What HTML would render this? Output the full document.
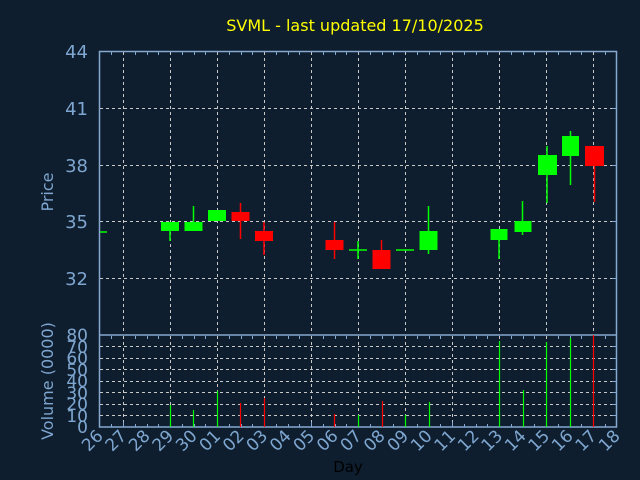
<!DOCTYPE html>
<html><head><meta charset="utf-8"><style>
html,body{margin:0;padding:0;background:#0f1e2e;}
svg{display:block}
text{font-family:"DejaVu Sans","Liberation Sans",sans-serif;}
</style></head><body>
<svg width="640" height="480" xmlns="http://www.w3.org/2000/svg">
<rect width="640" height="480" fill="#0f1e2e"/>
<text x="355" y="31" fill="#ffff00" font-size="16" text-anchor="middle">SVML - last updated 17/10/2025</text>
<g stroke="#c8c8c8" stroke-width="1" stroke-dasharray="3,3">
<path d="M123.5 52V334M170.5 52V334M217.5 52V334M264.5 52V334M311.5 52V334M358.5 52V334M405.5 52V334M452.5 52V334M499.5 52V334M546.5 52V334M593.5 52V334"/>
<path d="M100 108.5H616M100 165.5H616M100 221.5H616M100 278.5H616"/>
<path d="M123.5 336V427M170.5 336V427M217.5 336V427M264.5 336V427M311.5 336V427M358.5 336V427M405.5 336V427M452.5 336V427M499.5 336V427M546.5 336V427M593.5 336V427"/>
<path d="M100 346.5H616M100 358.5H616M100 369.5H616M100 381.5H616M100 392.5H616M100 404.5H616M100 415.5H616"/>
</g>
<g fill="none" stroke="#86a8d0" stroke-width="1.5">
<rect x="99.5" y="51.5" width="517" height="375.5"/>
<path d="M99.5 335H617"/>
</g>
<g stroke="#86a8d0" stroke-width="1">
<path d="M111.5 52v3M135.5 52v3M147.5 52v3M158.5 52v3M182.5 52v3M194.5 52v3M205.5 52v3M229.5 52v3M241.5 52v3M252.5 52v3M276.5 52v3M288.5 52v3M299.5 52v3M323.5 52v3M335.5 52v3M346.5 52v3M370.5 52v3M382.5 52v3M393.5 52v3M417.5 52v3M429.5 52v3M440.5 52v3M464.5 52v3M476.5 52v3M487.5 52v3M511.5 52v3M523.5 52v3M534.5 52v3M558.5 52v3M570.5 52v3M581.5 52v3M605.5 52v3"/>
<path d="M111.5 336v3M135.5 336v3M147.5 336v3M158.5 336v3M182.5 336v3M194.5 336v3M205.5 336v3M229.5 336v3M241.5 336v3M252.5 336v3M276.5 336v3M288.5 336v3M299.5 336v3M323.5 336v3M335.5 336v3M346.5 336v3M370.5 336v3M382.5 336v3M393.5 336v3M417.5 336v3M429.5 336v3M440.5 336v3M464.5 336v3M476.5 336v3M487.5 336v3M511.5 336v3M523.5 336v3M534.5 336v3M558.5 336v3M570.5 336v3M581.5 336v3M605.5 336v3"/>
<path d="M111.5 427v-3M135.5 427v-3M147.5 427v-3M158.5 427v-3M182.5 427v-3M194.5 427v-3M205.5 427v-3M229.5 427v-3M241.5 427v-3M252.5 427v-3M276.5 427v-3M288.5 427v-3M299.5 427v-3M323.5 427v-3M335.5 427v-3M346.5 427v-3M370.5 427v-3M382.5 427v-3M393.5 427v-3M417.5 427v-3M429.5 427v-3M440.5 427v-3M464.5 427v-3M476.5 427v-3M487.5 427v-3M511.5 427v-3M523.5 427v-3M534.5 427v-3M558.5 427v-3M570.5 427v-3M581.5 427v-3M605.5 427v-3"/>
<path d="M123.5 427v-5M170.5 427v-5M217.5 427v-5M264.5 427v-5M311.5 427v-5M358.5 427v-5M405.5 427v-5M452.5 427v-5M499.5 427v-5M546.5 427v-5M593.5 427v-5"/>
<path d="M612 108.5h5M612 165.5h5M612 221.5h5M612 278.5h5M612 346.5h5M612 358.5h5M612 369.5h5M612 381.5h5M612 392.5h5M612 404.5h5M612 415.5h5"/>
</g>
<g stroke-width="1.5">
<path d="M100 232H107" stroke="#00ff00"/>
<path d="M170 222V241" stroke="#00ff00"/><rect x="161" y="222" width="18" height="9" fill="#00ff00"/>
<path d="M193.5 206V231" stroke="#00ff00"/><rect x="184.5" y="222" width="18" height="9" fill="#00ff00"/>
<path d="M217 210V221" stroke="#00ff00"/><rect x="208" y="210" width="18" height="11" fill="#00ff00"/>
<path d="M240.5 203V239" stroke="#ff0000"/><rect x="231.5" y="212" width="18" height="9" fill="#ff0000"/>
<path d="M264 222V255" stroke="#ff0000"/><rect x="255" y="231" width="18" height="10" fill="#ff0000"/>
<path d="M334.5 222V259" stroke="#ff0000"/><rect x="325.5" y="240" width="18" height="10" fill="#ff0000"/>
<path d="M358 241V259M349 250H367" stroke="#00ff00"/>
<path d="M381.5 240V269" stroke="#ff0000"/><rect x="372.5" y="250" width="18" height="19" fill="#ff0000"/>
<path d="M405 250H396M405 250H414" stroke="#00ff00"/>
<path d="M428.5 206V254" stroke="#00ff00"/><rect x="419.5" y="231" width="18" height="19" fill="#00ff00"/>
<path d="M499 229V259" stroke="#00ff00"/><rect x="490.5" y="229" width="17" height="11" fill="#00ff00"/>
<path d="M522.5 201V235" stroke="#00ff00"/><rect x="514.5" y="221" width="17" height="11" fill="#00ff00"/>
<path d="M547 146V203" stroke="#00ff00"/><rect x="538" y="155" width="19" height="20" fill="#00ff00"/>
<path d="M570.5 131V185" stroke="#00ff00"/><rect x="562" y="136" width="17" height="20" fill="#00ff00"/>
<path d="M594.5 146V202" stroke="#ff0000"/><rect x="585" y="146" width="19" height="20" fill="#ff0000"/>
</g>
<g stroke-width="1.2">
<path d="M170.5 427V405M193.5 427V410M217.5 427V391M358.5 427V415M405.5 427V415M429.5 427V402M499.5 427V341M523.5 427V390M546.5 427V342M570.5 427V338" stroke="#00ff00"/>
<path d="M240.5 427V403M264.5 427V398M334.5 427V414M382.5 427V401M593.5 427V335" stroke="#ff0000"/>
</g>
<g fill="#7ea6d0" font-size="18" text-anchor="end">
<text x="88" y="58">44</text><text x="88" y="115">41</text><text x="88" y="172">38</text><text x="88" y="228">35</text><text x="88" y="285">32</text>
</g>
<g fill="#7ea6d0" font-size="17" text-anchor="end">
<text x="88" y="341">80</text><text x="88" y="353">70</text><text x="88" y="364">60</text><text x="88" y="376">50</text><text x="88" y="387">40</text><text x="88" y="399">30</text><text x="88" y="410">20</text><text x="88" y="422">10</text><text x="88" y="433">0</text>
</g>
<text transform="translate(53,192) rotate(-90)" fill="#7ea6d0" font-size="16" text-anchor="middle">Price</text>
<text transform="translate(53,381) rotate(-90)" fill="#7ea6d0" font-size="16" text-anchor="middle">Volume (0000)</text>
<g fill="#7ea6d0" font-size="17" text-anchor="end">
<text transform="translate(104,437) rotate(-45)">26</text>
<text transform="translate(127.5,437) rotate(-45)">27</text>
<text transform="translate(151,437) rotate(-45)">28</text>
<text transform="translate(174.5,437) rotate(-45)">29</text>
<text transform="translate(198,437) rotate(-45)">30</text>
<text transform="translate(221.5,437) rotate(-45)">01</text>
<text transform="translate(245,437) rotate(-45)">02</text>
<text transform="translate(268.5,437) rotate(-45)">03</text>
<text transform="translate(292,437) rotate(-45)">04</text>
<text transform="translate(315.5,437) rotate(-45)">05</text>
<text transform="translate(339,437) rotate(-45)">06</text>
<text transform="translate(362.5,437) rotate(-45)">07</text>
<text transform="translate(386,437) rotate(-45)">08</text>
<text transform="translate(409.5,437) rotate(-45)">09</text>
<text transform="translate(433,437) rotate(-45)">10</text>
<text transform="translate(456.5,437) rotate(-45)">11</text>
<text transform="translate(480,437) rotate(-45)">12</text>
<text transform="translate(503.5,437) rotate(-45)">13</text>
<text transform="translate(527,437) rotate(-45)">14</text>
<text transform="translate(550.5,437) rotate(-45)">15</text>
<text transform="translate(574,437) rotate(-45)">16</text>
<text transform="translate(597.5,437) rotate(-45)">17</text>
<text transform="translate(621,437) rotate(-45)">18</text>
</g>
<text x="348" y="472" fill="#000000" font-size="15" text-anchor="middle">Day</text>
</svg>
</body></html>
